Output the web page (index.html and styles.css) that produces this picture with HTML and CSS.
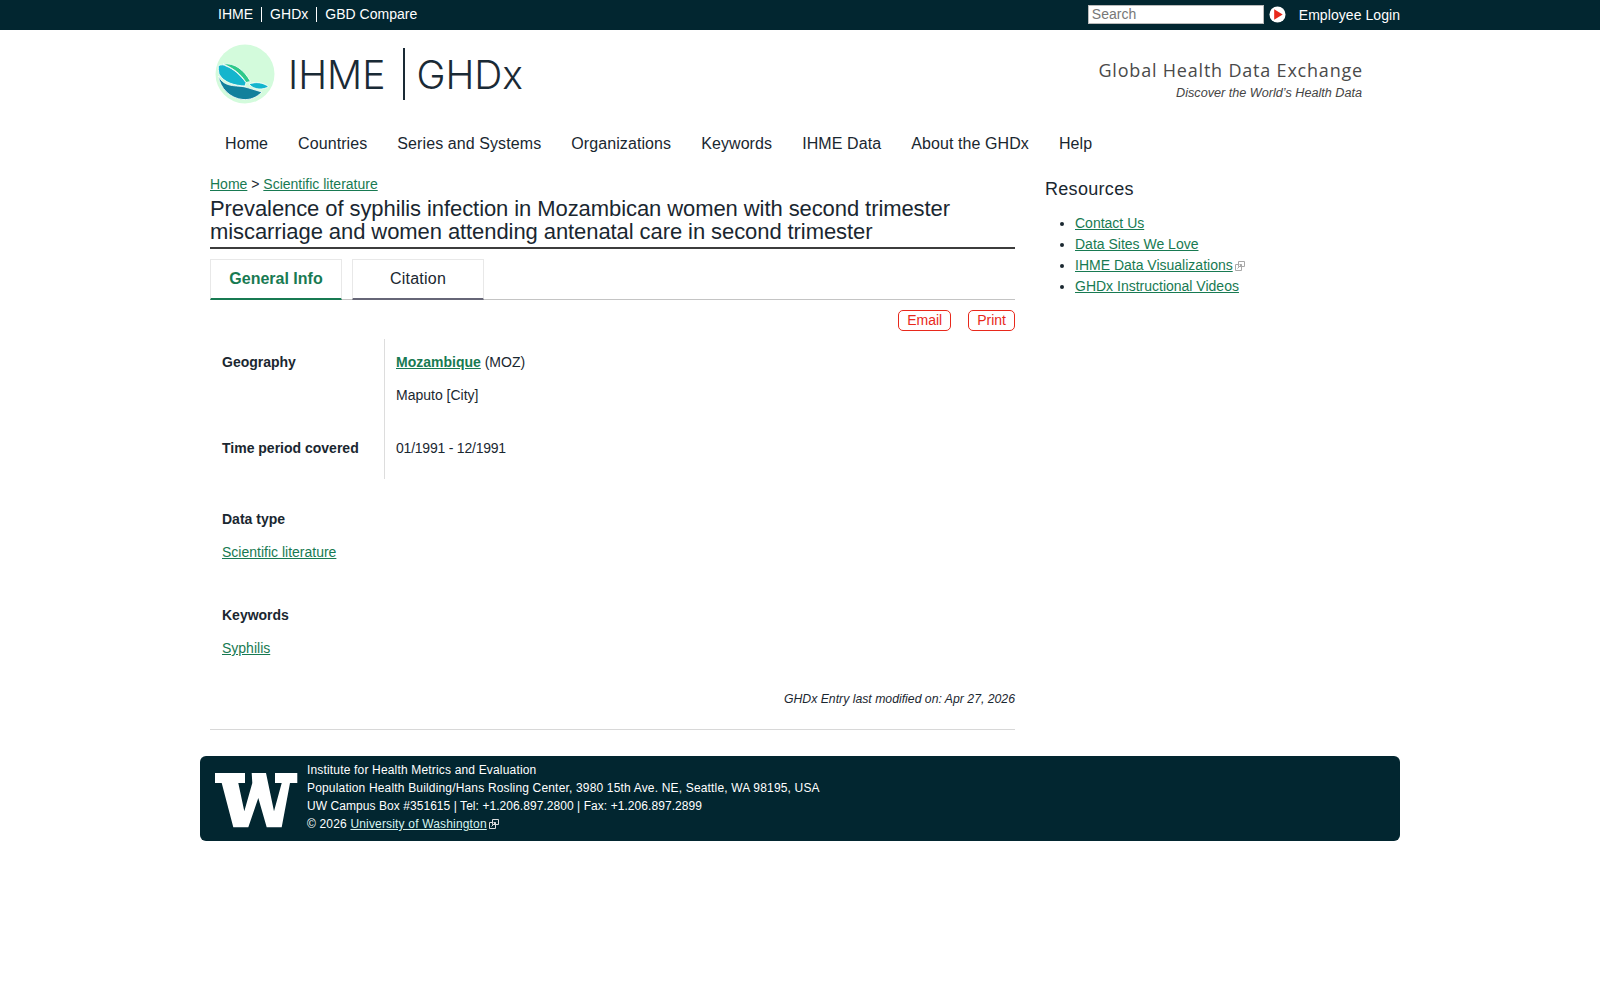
FILE: index.html
```html
<!DOCTYPE html>
<html lang="en">
<head>
<meta charset="utf-8">
<title>Prevalence of syphilis infection in Mozambican women</title>
<link rel="stylesheet" href="styles.css">
</head>
<body>
<div class="topbar">
  <div class="topbar-inner">
    <ul class="toplinks">
      <li>IHME</li>
      <li>GHDx</li>
      <li>GBD Compare</li>
    </ul>
    <div class="topright">
      <div class="searchbox">Search</div>
      <svg class="go" width="17" height="17" viewBox="0 0 18 18"><circle cx="9" cy="9" r="8.500" fill="#fff"/><path d="M5.500 3.500 L14.500 9 L5.500 14.500 Z" fill="#e8281b"/></svg>
      <span class="login">Employee Login</span>
    </div>
  </div>
</div>
<div class="wrap">
  <header class="brand">
    <div class="logo">
      <svg width="60" height="60" viewBox="0 0 60 60">
        <circle cx="30" cy="30" r="29.500" fill="#d3fbdc"/>
        <path d="M3.500 32 C9 44 22 41 30 43 C34 44 40 46 47 48 C41 54 35 56 28 55.500 C15 54.500 5 44 3.500 32 Z" fill="#12809c" stroke="#fff" stroke-width=".8"/>
        <path d="M3.300 21.700 C6 20.500 9 20.500 11 22 C19 25 25 31 31 38.500 L30 42 C20 41.500 9 39 4 30 C3.400 27 3.200 24 3.300 21.700 Z" fill="#14b5cd" stroke="#fff" stroke-width=".8"/>
        <path d="M8 20 C20 18.500 29 26 35.500 37.500 L31 38.500 C26 30 18 24 8 20 Z" fill="#2ec98a" stroke="#fff" stroke-width=".8"/>
        <path d="M34 40 C41 37.500 48 38.500 53.500 42.500 C49 46 39 46.500 34 40 Z" fill="#14b5cd" stroke="#fff" stroke-width=".8"/>
      </svg>
      <span class="logo-text ihme">IHME</span>
      <span class="logo-sep"></span>
      <span class="logo-text">GHDx</span>
    </div>
    <div class="tagline">
      <div class="tag-main">Global Health Data Exchange</div>
      <div class="tag-sub">Discover the World’s Health Data</div>
    </div>
  </header>
  <nav class="nav">
    <a>Home</a><a>Countries</a><a>Series and Systems</a><a>Organizations</a><a>Keywords</a><a>IHME Data</a><a>About the GHDx</a><a>Help</a>
  </nav>
  <div class="columns">
    <main class="main">
      <div class="crumbs"><a class="lnk">Home</a> &gt; <a class="lnk">Scientific literature</a></div>
      <h1 class="title">Prevalence of syphilis infection in Mozambican women with second trimester miscarriage and women attending antenatal care in second trimester</h1>
      <div class="tabs">
        <div class="tab active">General Info</div>
        <div class="tab">Citation</div>
      </div>
      <div class="actions">
        <span class="pill">Email</span>
        <span class="pill">Print</span>
      </div>
      <div class="facts">
        <div class="fact-label geo">Geography</div>
        <div class="fact-val geo">
          <p class="first"><a class="lnk strong">Mozambique</a> (MOZ)</p>
          <p>Maputo [City]</p>
        </div>
        <div class="fact-label time">Time period covered</div>
        <div class="fact-val time"><p class="first dates">01/1991 - 12/1991</p></div>
      </div>
      <section class="block">
        <div class="block-label">Data type</div>
        <a class="lnk">Scientific literature</a>
      </section>
      <section class="block kw">
        <div class="block-label">Keywords</div>
        <a class="lnk">Syphilis</a>
      </section>
      <div class="modified">GHDx Entry last modified on: Apr 27, 2026</div>
    </main>
    <aside class="side">
      <h2 class="side-title">Resources</h2>
      <ul class="side-list">
        <li><a class="lnk">Contact Us</a></li>
        <li><a class="lnk">Data Sites We Love</a></li>
        <li><a class="lnk">IHME Data Visualizations</a><svg class="ext" width="10" height="10" viewBox="0 0 10 10"><path d="M3.500 .5h6v5h-6z M3.500 3.500h-3v6h6v-4 M2.500 7.500l4-4 M4.500 3.500h2v2" fill="none" stroke="#a8a8a8" stroke-width="1"/></svg></li>
        <li><a class="lnk">GHDx Instructional Videos</a></li>
      </ul>
    </aside>
  </div>
  <footer class="footer">
    <svg class="uw" width="83" height="55" viewBox="0 0 83 55"><path d="M0 0H30V10H23.300L29.300 38.300 37.300 10 36.700 0H51L59 38.300 66.700 10H60V0H82.300V10H75L66.700 54.300H51.700L43.300 25 33.300 54.300H18.300L6.700 10H0Z" fill="#fff"/></svg>
    <div class="foot-text">
      <div>Institute for Health Metrics and Evaluation</div>
      <div>Population Health Building/Hans Rosling Center, 3980 15th Ave. NE, Seattle, WA 98195, USA</div>
      <div class="foot-phone">UW Campus Box #351615 | Tel: +1.206.897.2800 | Fax: +1.206.897.2899</div>
      <div>© 2026 <a class="foot-link">University of Washington</a><svg class="ext" width="10" height="10" viewBox="0 0 10 10"><path d="M3.500 .5h6v5h-6z M3.500 3.500h-3v6h6v-4 M2.500 7.500l4-4 M4.500 3.500h2v2" fill="none" stroke="#ddd" stroke-width="1"/></svg></div>
    </div>
  </footer>
</div>
</body>
</html>
```
FILE: styles.css
```css
* { box-sizing: border-box; }
html, body { margin: 0; padding: 0; }
body { background: #fff; color: #1a2730; font-family: "Liberation Sans", Arial, sans-serif; font-size: 14px; }
a { color: inherit; }
.topbar { background: #022630; height: 30px; color: #fff; }
.topbar-inner { width: 1200px; margin: 0 auto; height: 29px; display: flex; justify-content: space-between; align-items: center; }
.toplinks { list-style: none; margin: 0; padding: 0 0 0 10px; display: flex; letter-spacing: .02px; }
.toplinks li { padding: 0 8px; line-height: 15px; border-left: 1px solid #fff; }
.toplinks li:first-child { border-left: 0; padding-left: 8px; }
.topright { display: flex; align-items: center; }
.searchbox { width: 176px; height: 19px; background: #fff; border: 1px solid #bbb; color: #777; padding-left: 3px; line-height: 17px; font-size: 14px; letter-spacing: .05px; }
.go { margin-left: 5px; }
.login { margin-left: 13px; letter-spacing: .06px; }
.wrap { width: 1200px; margin: 0 auto; }
.brand { height: 90px; padding: 14px 38px 0 15px; display: flex; justify-content: space-between; }
.logo { display: flex; align-items: center; height: 60px; }
.logo-text { font-family: Inter, "Liberation Sans", sans-serif; font-weight: 300; font-size: 39px; color: #1a2a35; }
.logo-text.ihme { margin-left: 13px; }
.logo-sep { width: 2px; height: 52px; background: #1a2a35; margin: 0 11px 0 18px; }
.tagline { text-align: right; padding-top: 15px; }
.tag-main { font-family: "Open Sans", sans-serif; font-size: 18px; color: #4a4a4a; line-height: 24px; letter-spacing: .8px; margin-top: -1px; margin-bottom: 1px; margin-right: -1px; }
.tag-sub { font-style: italic; font-size: 12.65px; color: #444; line-height: 20px; }
.nav { padding-left: 20px; height: 36px; display: flex; gap: 30px; align-items: center; margin-top: 6px; letter-spacing: .09px; }
.nav a { font-size: 16px; padding: 0 5px; margin-right: -10px; }
.columns { display: flex; padding-left: 10px; }
.main { width: 805px; }
.lnk { color: #187a52; text-decoration: underline; }
.strong { font-weight: 700; }
.crumbs { line-height: 18px; margin-top: 13px; }
.title { font-weight: 400; font-size: 22px; line-height: 23px; margin: 4px 0 0; padding-bottom: 4px; border-bottom: 2px solid #3c3c3c; letter-spacing: -.08px; }
.tabs { display: flex; gap: 10px; margin-top: 10px; border-bottom: 1px solid #c4c4c4; height: 41px; }
.tab { width: 132px; height: 41px; border: 1px solid #e8e8e8; border-bottom: 2px solid #667; text-align: center; font-size: 16px; line-height: 38px; letter-spacing: .25px; }
.tab.active { font-weight: 700; color: #187a52; border-bottom-color: #187a52; letter-spacing: 0; }
.actions { display: flex; justify-content: flex-end; gap: 17px; margin-top: 10px; height: 21px; }
.pill { border: 1px solid #e8281b; border-radius: 5px; color: #e8281b; padding: 0 8px; line-height: 19px; }
.facts { display: grid; grid-template-columns: 174px 1fr; margin-top: 8px; }
.fact-label { font-weight: 700; padding: 14px 0 0 12px; line-height: 18px; }
.fact-val { border-left: 1px solid #ddd; padding-left: 11px; }
.fact-val p { margin: 15px 0 0; line-height: 18px; }
.fact-val p.first { margin-top: 14px; }
.fact-val p.dates { letter-spacing: -.22px; }
.fact-val.geo { height: 86px; }
.fact-val.time { height: 54px; }
.block { padding: 0 0 0 12px; margin-top: 31px; line-height: 18px; }
.block-label { font-weight: 700; margin-bottom: 15px; }
.block.kw { margin-top: 45px; }
.modified { text-align: right; font-style: italic; font-size: 12.25px; margin-top: 33px; padding-bottom: 21px; border-bottom: 1px solid #d8d8d8; line-height: 18px; }
.side { padding: 15px 0 0 30px; }
.side-title { font-weight: 400; font-size: 18px; line-height: 24px; margin: 0; letter-spacing: .3px; }
.side-list { margin: 12px 0 0; padding-left: 30px; }
.side-list li { line-height: 21px; }
.ext { margin-left: 2px; vertical-align: -1px; }
.footer { margin-top: 26px; height: 85px; background: #022630; border-radius: 6px; color: #fff; display: flex; padding: 5px 0 0 15px; font-size: 12px; letter-spacing: .17px; }
.uw { margin-top: 12px; flex: none; }
.foot-text { margin-left: 9px; line-height: 18px; }
.foot-phone { letter-spacing: .06px; }
.foot-link { color: #d6f5f0; text-decoration: underline; }
```
